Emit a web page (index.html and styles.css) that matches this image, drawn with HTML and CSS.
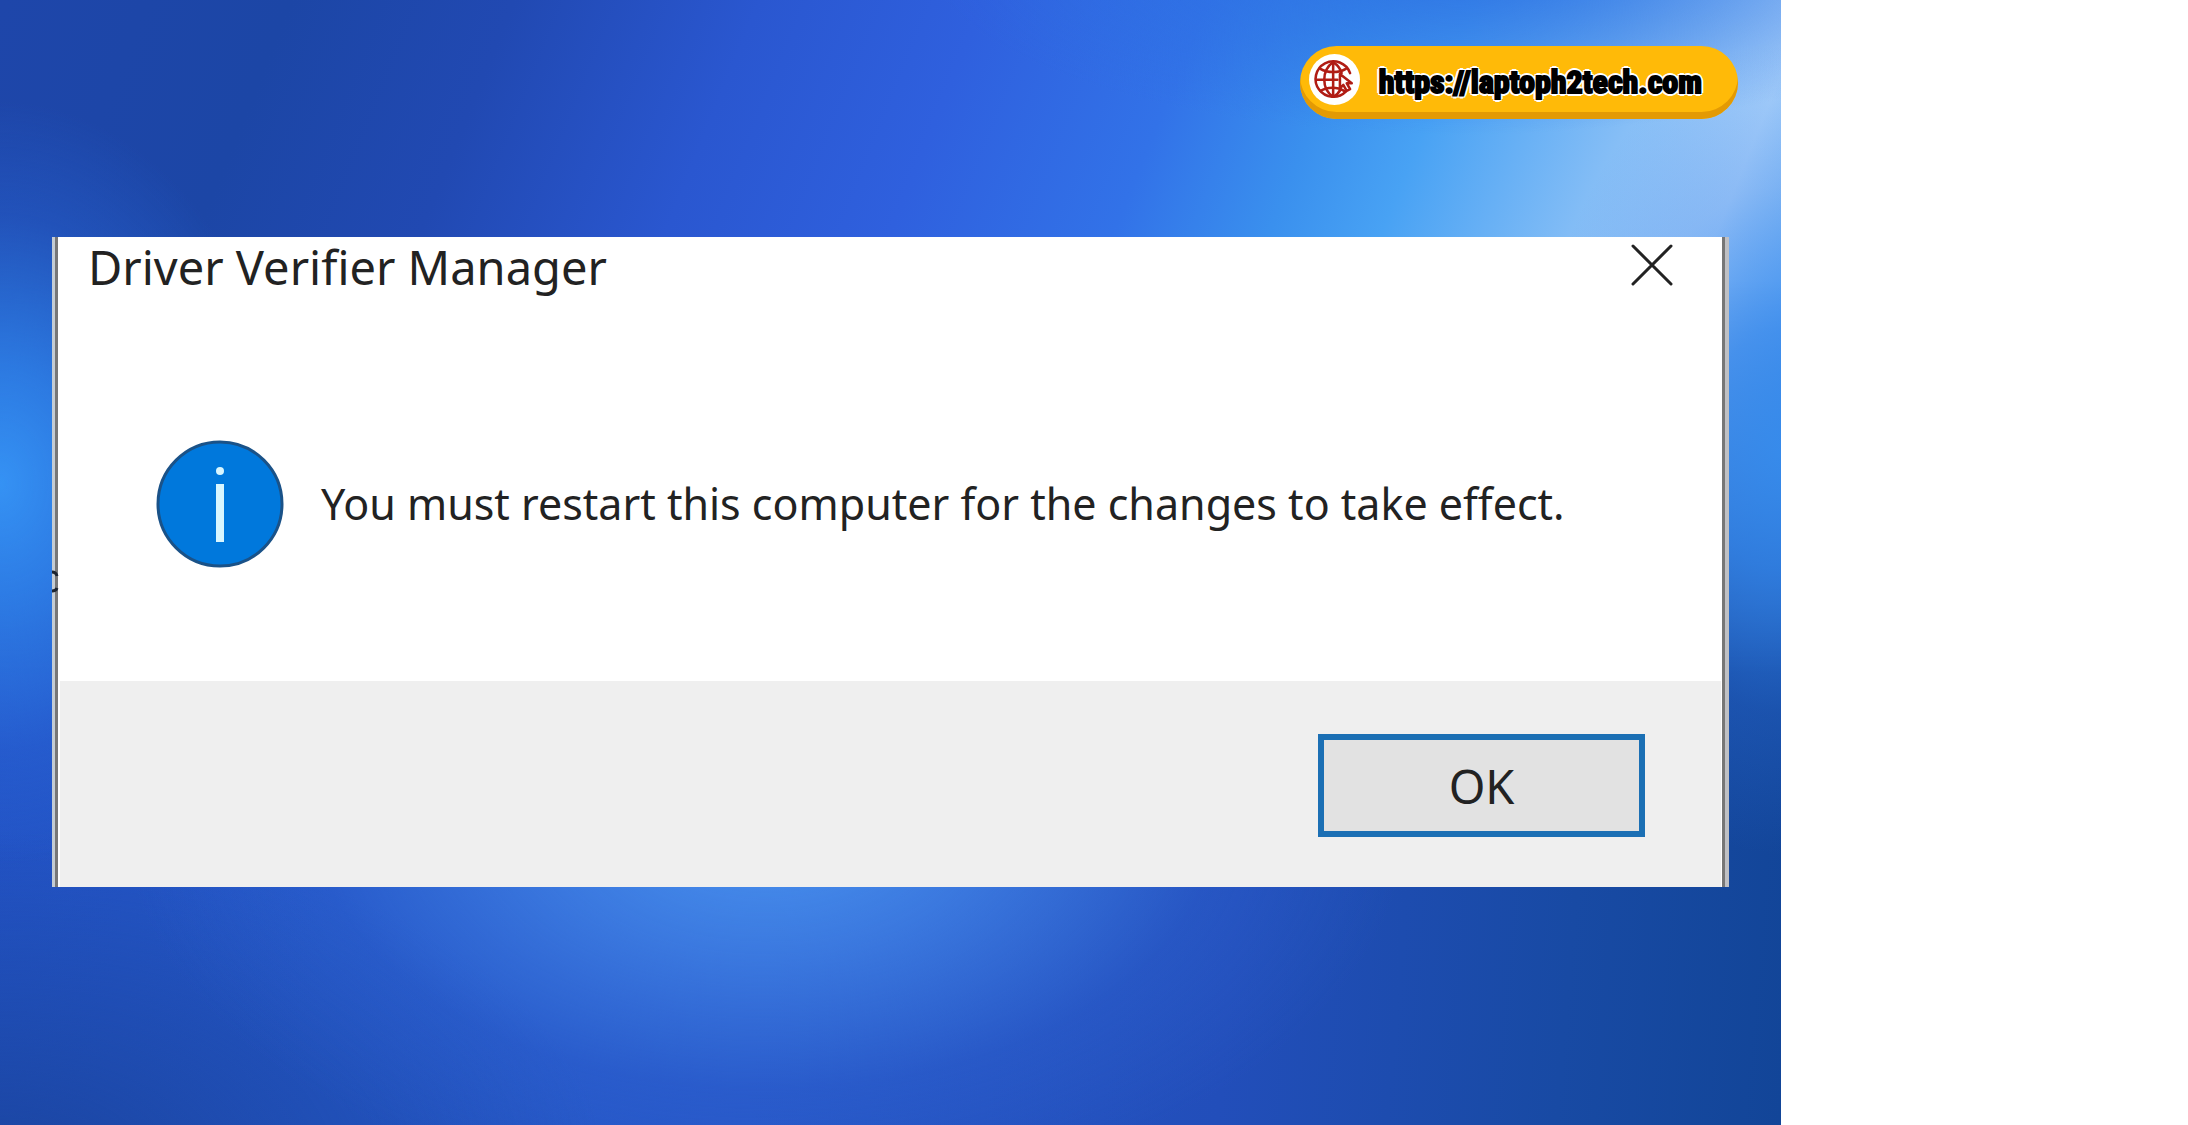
FILE: index.html
```html
<!DOCTYPE html>
<html lang="en">
<head>
    <meta charset="UTF-8">
    <meta name="viewport" content="width=device-width, initial-scale=1.0">
    <title>Driver Verifier Manager</title>
    <link rel="stylesheet" href="styles.css">
</head>
<body>
    <div class="wallpaper">
        <header class="topbar">
            <a class="badge" href="https://laptoph2tech.com">
                <span class="badge-icon">
                    <svg viewBox="0 0 52 52" fill="none" stroke="#b01c14" stroke-width="3" stroke-linecap="round" stroke-linejoin="round">
                        <path d="M45 19A21 21 0 1 0 40 41"/>
                        <path d="M25 6C11 16 11 38 25 47"/>
                        <path d="M25 6v41M5 27h25"/>
                        <path d="M25 6c6 4 9 9 10 13M34 38c-2 4-5 7-9 9"/>
                        <path d="M10 14c8 5 22 5 30 0M10 40c8-5 20-5 28 0"/>
                        <path d="M33 20v17l4-4 4 7 4-2-4-7h6z" fill="#fff"/>
                    </svg>
                </span>
                <span class="badge-text">https://laptoph2tech.com</span>
            </a>
        </header>

        <main class="dialog" role="dialog" aria-labelledby="dialog-title">
            <div class="titlebar">
                <h1 id="dialog-title">Driver Verifier Manager</h1>
                <button class="close" type="button" aria-label="Close">
                    <svg viewBox="0 0 42 42" stroke="#222" stroke-width="3" stroke-linecap="round">
                        <path d="M2 2l38 38M40 2L2 40"/>
                    </svg>
                </button>
            </div>
            <div class="message">
                <svg class="info" viewBox="0 0 128 128">
                    <circle cx="64" cy="64" r="62" fill="#0078dc" stroke="#1a5288" stroke-width="3"/>
                    <circle cx="64" cy="31" r="4" fill="#d8f6ff"/>
                    <rect x="60" y="44" width="8" height="58" fill="#d8f6ff"/>
                </svg>
                <p>You must restart this computer for the changes to take effect.</p>
            </div>
            <div class="actions">
                <button class="ok" type="button">OK</button>
            </div>
            <!-- piece of the window behind showing through the border -->
            <svg class="sliver" viewBox="0 0 8 26" fill="none" stroke="#1c2430" stroke-width="3">
                <path d="M0 3q4 0 5 4M5 19q-1 3-5 3"/>
            </svg>
        </main>
    </div>
</body>
</html>
```

FILE: styles.css
```css
* {
    box-sizing: border-box;
}
body {
    margin: 0;
    background: #fff;
    font-family: "Noto Sans", "Open Sans", sans-serif;
    color: #222;
}
.wallpaper {
    position: relative;
    isolation: isolate;
    width: 81.4%;
    min-height: 100vh;
    padding: 46px 52px;
    background:
        radial-gradient(ellipse 36% 34% at 43% 73%, rgba(74, 148, 240, 1) 0%, rgba(66, 132, 232, 0.75) 35%, rgba(50, 104, 216, 0.3) 70%, rgba(40, 90, 205, 0) 100%),
        radial-gradient(ellipse 34% 30% at 0% 104%, rgba(26, 68, 158, 0.9), rgba(26, 68, 158, 0) 100%),
        linear-gradient(95deg, #2252c4 0%, #2456c6 22%, #2656c6 45%, #224eba 70%, #184aa4 88%, #124598 100%);
}
/* upper half of the wallpaper, faded into the lower one */
.wallpaper::before {
    content: "";
    position: absolute;
    inset: 0;
    z-index: -2;
    background:
        radial-gradient(ellipse 30% 16% at 82% -4%, rgba(44, 112, 226, 1), rgba(44, 112, 226, 0) 100%),
        linear-gradient(112deg, #1e46aa 0%, #1c46a6 13%, #2149b2 23%, #2a57d0 34%, #2f60de 44%, #3272e8 54%, #3a90ee 61%, #48a2f4 66%, #86bef6 75%, #a8d0fa 81%, #62acf2 88%);
    mask-image: linear-gradient(#000 25%, transparent 60%);
}
/* bright spots along both sides */
.wallpaper::after {
    content: "";
    position: absolute;
    inset: 0;
    z-index: -1;
    background:
        radial-gradient(ellipse 16% 34% at 0% 43%, #3592f4 0%, rgba(48, 134, 238, 0.8) 30%, rgba(44, 110, 226, 0.3) 70%, rgba(40, 100, 220, 0) 100%),
        radial-gradient(ellipse 14% 36% at 100% 40%, rgba(54, 140, 238, 0.9) 0%, rgba(50, 134, 238, 0.7) 30%, rgba(50, 120, 230, 0.25) 65%, rgba(50, 120, 230, 0) 100%);
}
.topbar {
    display: flex;
    justify-content: flex-end;
    margin-right: -9px;
}
.badge {
    display: flex;
    align-items: center;
    gap: 19px;
    height: 73px;
    padding: 0 36px 7px 9px;
    border-radius: 37px;
    background: #ffba08;
    box-shadow: inset 0 -7px #e39a04;
    text-decoration: none;
    color: #000;
}
.badge-icon {
    display: flex;
    align-items: center;
    justify-content: center;
    width: 51px;
    height: 51px;
    border-radius: 50%;
    background: #fff;
}
.badge-icon svg {
    width: 44px;
    height: 44px;
}
.badge-text {
    padding-top: 5px;
    font-family: "Roboto Condensed", "Liberation Sans Narrow", sans-serif;
    font-size: 32px;
    font-weight: 700;
    -webkit-text-stroke: 2px #000;
    text-shadow: 3px 0 #fff, -3px 0 #fff, 0 3px #fff, 0 -3px #fff, 2px 2px #fff, -2px 2px #fff, 2px -2px #fff, -2px -2px #fff;
}
.dialog {
    position: relative;
    margin-top: 118px;
    padding: 0 8px;
    background: linear-gradient(to right, #c4ccd4 3px, #777 3px, #777 6px, #fff 6px, #fff calc(100% - 7px), #777 calc(100% - 7px), #777 calc(100% - 4px), #bfc0c4 calc(100% - 4px));
}
.titlebar {
    display: flex;
    align-items: flex-start;
    justify-content: space-between;
    padding: 0 48px 0 28px;
}
.titlebar h1 {
    margin: 0;
    font-size: 47px;
    font-weight: normal;
    line-height: 60px;
}
.close {
    margin-top: 7px;
    padding: 0;
    border: none;
    background: none;
}
.close svg {
    display: block;
    width: 42px;
    height: 42px;
}
.message {
    display: flex;
    align-items: center;
    gap: 37px;
    padding: 143px 96px 113px;
}
.info {
    flex: none;
    width: 128px;
    height: 128px;
}
.message p {
    margin: 0;
    font-size: 43px;
    line-height: 56px;
}
.actions {
    display: flex;
    justify-content: flex-end;
    padding: 53px 76px 50px;
    background: #efefef;
}
.ok {
    width: 327px;
    height: 103px;
    border: 6px solid #1b6fb4;
    background: #e2e2e2;
    font-family: inherit;
    font-size: 47px;
    color: #222;
}
.sliver {
    position: absolute;
    left: 0;
    top: 332px;
    width: 8px;
    height: 26px;
}
```
